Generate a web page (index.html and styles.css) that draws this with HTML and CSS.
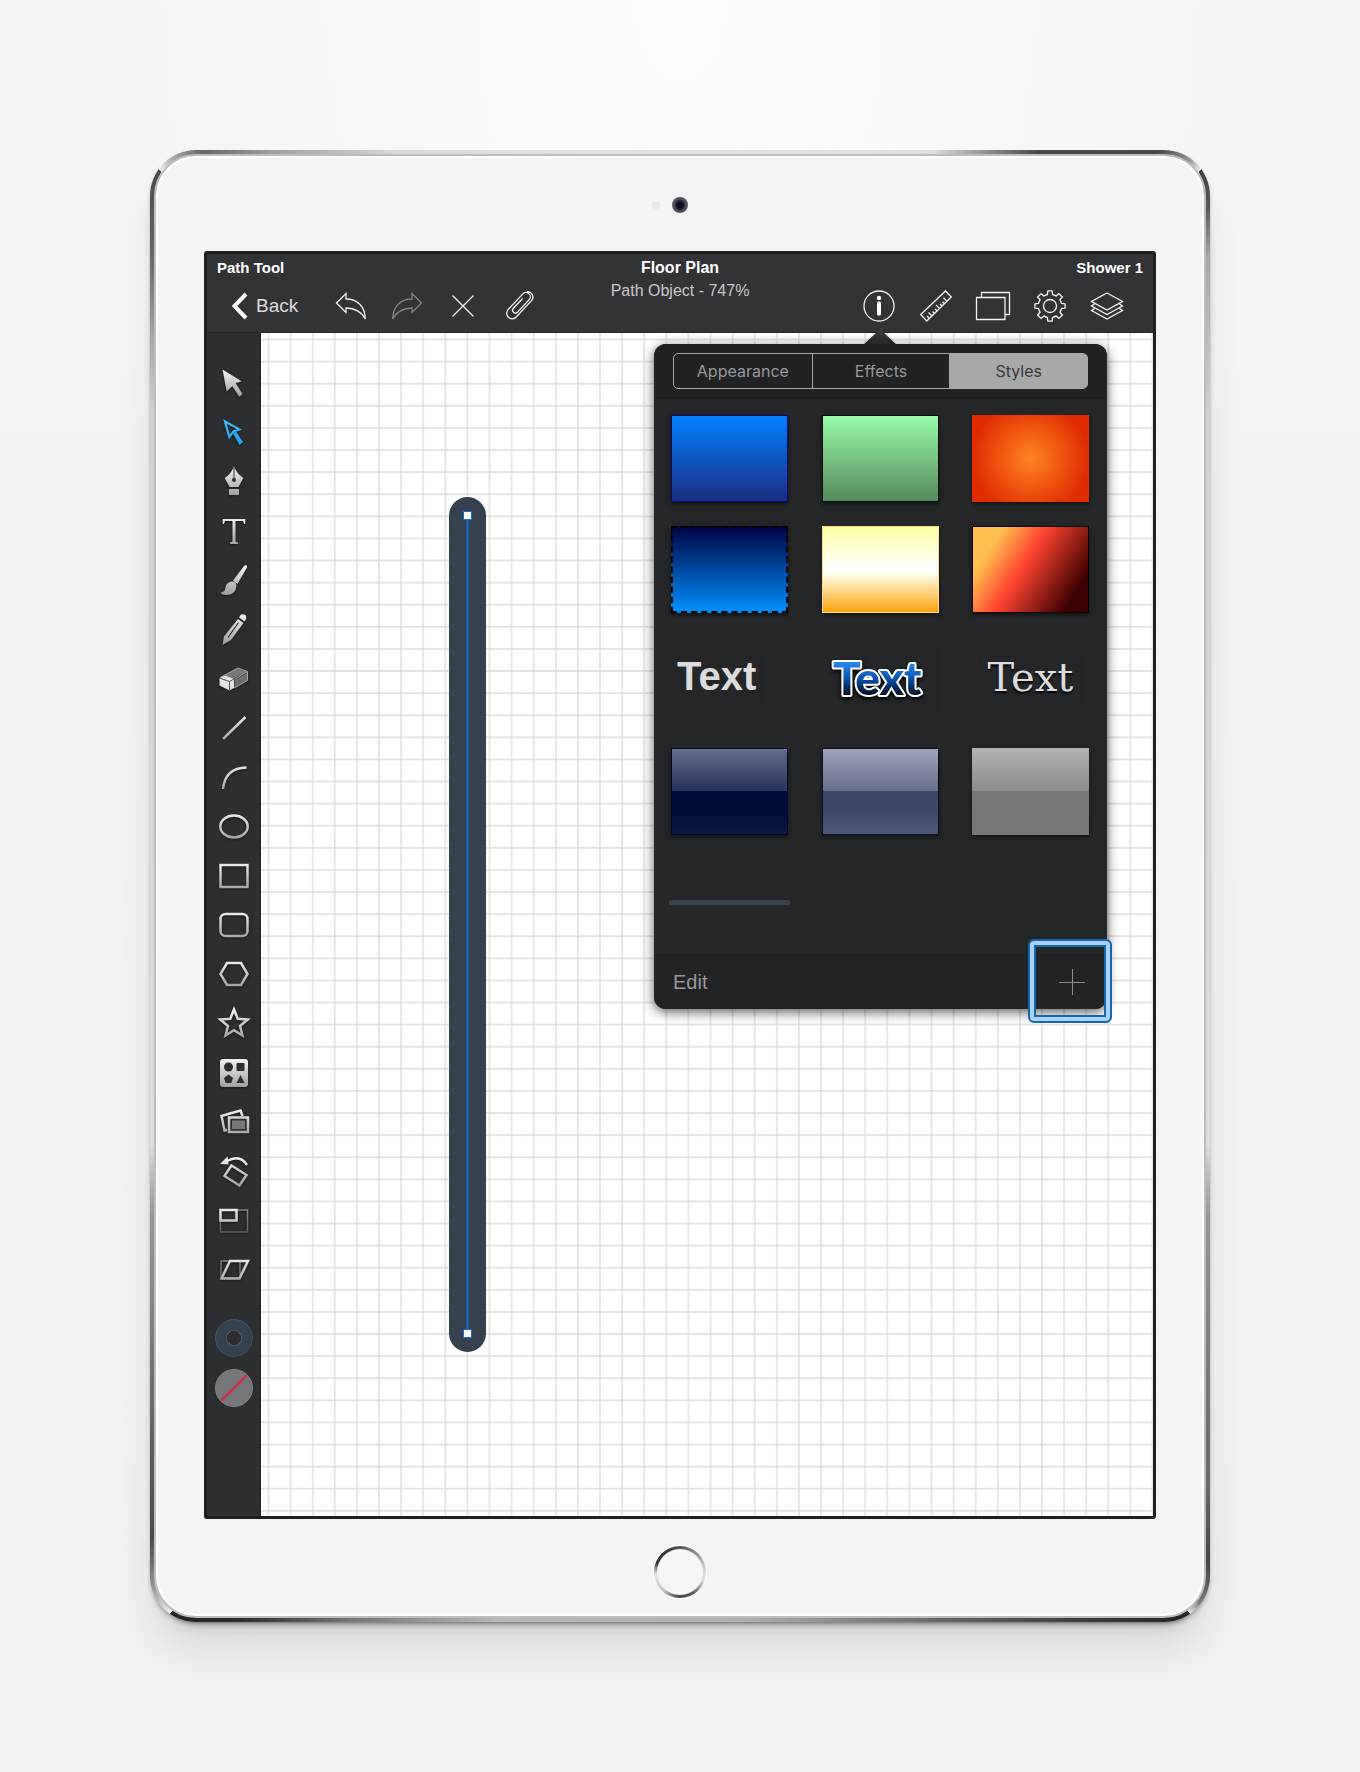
FILE: index.html
```html
<!DOCTYPE html>
<html lang="en">
<head>
<meta charset="utf-8">
<meta name="viewport" content="width=device-width, initial-scale=1">
<title>Floor Plan</title>
<link rel="stylesheet" href="styles.css">
</head>
<body>
<svg class="defs" width="0" height="0" aria-hidden="true">
  <defs>
    <linearGradient id="metal" gradientUnits="userSpaceOnUse" x1="0" y1="2" x2="0" y2="30"><stop offset="0" stop-color="#f2f2f3"/><stop offset="1" stop-color="#9fa0a2"/></linearGradient>
    <linearGradient id="dim" gradientUnits="userSpaceOnUse" x1="0" y1="2" x2="0" y2="30"><stop offset="0" stop-color="#8a8a8c"/><stop offset="1" stop-color="#5c5c5e"/></linearGradient>
    <linearGradient id="azure" gradientUnits="userSpaceOnUse" x1="0" y1="2" x2="0" y2="30"><stop offset="0" stop-color="#4cc3ff"/><stop offset="1" stop-color="#1a9cf0"/></linearGradient>
    <linearGradient id="ink" gradientUnits="userSpaceOnUse" x1="0" y1="14" x2="0" y2="48"><stop offset="0" stop-color="#2b8cf5"/><stop offset=".5" stop-color="#0c55b0"/><stop offset="1" stop-color="#000a1c"/></linearGradient>
  </defs>
</svg>

<main class="device">
  <div class="face">
    <div class="bezel-top"><span class="camera"></span></div>

    <div class="screen">
      <header class="header">
        <div class="header-left">
          <span class="context">Path Tool</span>
          <nav class="bar bar-left">
            <button class="back" type="button">
              <svg width="16" height="28" viewBox="0 0 16 28"><path d="M14 2 2.500 14 14 26" fill="none" stroke="#fff" stroke-width="4"/></svg>
              Back
            </button>
            <button class="icon" type="button" aria-label="Undo"><svg viewBox="0 0 32 32"><path d="M1.500 13 11 3.500V9C23 9 30 17 30.300 29 26 21 20 18 11 18V22.500Z"/></svg></button>
            <button class="icon muted" type="button" aria-label="Redo"><svg viewBox="0 0 32 32"><path d="M30.500 13 21 3.500V9C9 9 2 17 1.700 29 6 21 12 18 21 18V22.500Z"/></svg></button>
            <button class="icon" type="button" aria-label="Close"><svg viewBox="0 0 32 32"><path d="M5.500 5.500 26.500 26.500M26.500 5.500 5.500 26.500"/></svg></button>
            <button class="icon" type="button" aria-label="Attach"><svg viewBox="0 0 32 32"><path transform="rotate(43 16 16)" d="M21.500 8V26A5.500 5.500 0 0 1 10.500 26V4.500A4.300 4.300 0 0 1 19.100 4.500V21.500A2.800 2.800 0 0 1 13.500 21.500V8M21.500 8V3.500A5.500 5.500 0 0 0 12 0"/></svg></button>
          </nav>
        </div>

        <div class="header-mid">
          <h1 class="doc-title">Floor Plan</h1>
          <p class="doc-sub">Path Object - 747%</p>
        </div>

        <div class="header-right">
          <span class="context">Shower 1</span>
          <nav class="bar bar-right">
            <button class="icon" type="button" aria-label="Info"><svg viewBox="0 0 32 32"><circle cx="16" cy="16" r="15"/><circle cx="16" cy="8" r="2.200" class="solid"/><rect x="14" y="11.500" width="4" height="14" rx="1.500" class="solid"/></svg></button>
            <button class="icon" type="button" aria-label="Ruler"><svg viewBox="0 0 32 32"><path d="M25.500 1 31.300 7 6.700 31 .7 24.500ZM9.500 28.500 7 26M12 26 8.500 22.500M14.500 23.500 12.500 21.500M17 21 15 19M19.500 18.500 16 15M22 16 20 14M24.500 13.800 22.500 11.800M27 11.200 23.500 7.700"/></svg></button>
            <button class="icon" type="button" aria-label="Canvases"><svg viewBox="0 0 32 32"><path d="M-.5 7.500H28V29.500H-.5ZM4.500 7.500V2.500H32.500V24.500H28"/></svg></button>
            <button class="icon" type="button" aria-label="Settings"><svg viewBox="0 0 32 32"><g transform="translate(16 16)"><path stroke-linejoin="round" d="M-2.600-11.400-2.200-15.100H2.200L2.600-11.400Q4.600-11 6.200-9.900L9-12.400 12.400-9 9.900-6.200Q11-4.600 11.400-2.600L15.100-2.200V2.200L11.400 2.600Q11 4.600 9.900 6.200L12.400 9 9 12.400 6.200 9.900Q4.600 11 2.600 11.400L2.200 15.100H-2.200L-2.600 11.400Q-4.600 11-6.200 9.900L-9 12.400-12.400 9-9.900 6.200Q-11 4.600-11.400 2.600L-15.100 2.200V-2.200L-11.400-2.600Q-11-4.600-9.900-6.200L-12.400-9-9-12.400-6.200-9.900Q-4.600-11-2.600-11.400Z"/><circle r="6.500"/></g></svg></button>
            <button class="icon" type="button" aria-label="Layers"><svg viewBox="0 0 32 32"><path d="M16 3 31.500 11.500 16 20 .5 11.500ZM3.500 14 .5 16 16 24.500 31.500 16 28.500 14M3.500 18.500 .5 20.500 16 29 31.500 20.500 28.500 18.500"/></svg></button>
          </nav>
        </div>
      </header>

      <div class="workspace">
        <aside class="sidebar">
          <div class="tools">
            <button class="tool" type="button" aria-label="Select"><svg viewBox="0 0 32 32"><path d="M4.500 2.500 23.700 14.300 17.700 16.300 24.500 27 21.300 29.700 14.300 19.300 8.700 24.500Z" class="fill"/></svg></button>
            <button class="tool" type="button" aria-label="Path tool" aria-pressed="true"><svg viewBox="0 0 32 32"><path d="M7 5.500 21.500 13.500 15.500 15.500 11.300 21Z" fill="none" stroke="url(#azure)" stroke-width="2.200"/><path d="M15 17.500 18 15.500 25 26 21.500 29Z" fill="url(#azure)"/></svg></button>
            <button class="tool" type="button" aria-label="Pen"><svg viewBox="0 0 32 32"><path d="M16 1Q18 8 25.300 13L20.500 22H11.500L6.700 13Q14 8 16 1Z" class="fill"/><rect x="11" y="24" width="10" height="6" class="fill"/><path d="M16 2V14" stroke="#2d2e31"/><circle cx="16" cy="15" r="2" fill="#2d2e31"/></svg></button>
            <button class="tool" type="button" aria-label="Text"><svg viewBox="0 0 32 32"><path d="M4.700 4H27.300V9H26L25 6H17.500V26.500L20 27.500V29H12V27.500L14.500 26.500V6H7L6 9H4.700Z" class="fill"/></svg></button>
            <button class="tool" type="button" aria-label="Brush"><svg viewBox="0 0 32 32"><path d="M26.500 1.500Q29.500.5 29 3.500L19.500 20 15 16.500ZM13.500 17.500Q18 17 18.500 21.500 18 31 8 31 4 31 2.500 28.500 6 28.500 7 25.500 7.500 18.500 13.500 17.500Z" class="fill"/></svg></button>
            <button class="tool" type="button" aria-label="Pencil"><svg viewBox="0 0 32 32"><path d="M20 6 25.500 10 13 27 4.500 32 6 23.500Z" class="fill"/><path d="M10 24.500 20.500 9.500" stroke="#2d2e31" stroke-width="1.200"/><path d="M21 4.500Q23-.5 27.500 2 29.500 5 26.500 8.500Z" class="fill"/></svg></button>
            <button class="tool" type="button" aria-label="Eraser"><svg viewBox="0 0 32 32"><path d="M2 14.500 20 5 29.500 8.500 13 17Z" fill="#77787a"/><path d="M16.500 17 29.500 9.500V17.500L16.500 25.500Z" fill="#6c6d70"/><path d="M1.500 15 7 12.500 16 16V25L11.500 27.500 1.500 22.500Z" fill="#e2e2e3"/><path d="M1.500 15 11.500 18.500 16 16M11.500 18.500V27" fill="none" stroke="#55565a"/><path d="M2 14.500 20 5 29.500 8.500V17.500L16 25M16 16.500 29.500 8.500" fill="none" stroke="#a5a5a7"/></svg></button>
            <button class="tool" type="button" aria-label="Line"><svg viewBox="0 0 32 32"><path d="M5 27 27.500 5" class="line"/></svg></button>
            <button class="tool" type="button" aria-label="Arc"><svg viewBox="0 0 32 32"><path d="M5 28Q7 7 28.500 6.500" class="line"/></svg></button>
            <button class="tool" type="button" aria-label="Ellipse"><svg viewBox="0 0 32 32"><ellipse cx="16" cy="16.500" rx="13.700" ry="11" class="line"/></svg></button>
            <button class="tool" type="button" aria-label="Rectangle"><svg viewBox="0 0 32 32"><rect x="2.500" y="5" width="27" height="22" class="line"/></svg></button>
            <button class="tool" type="button" aria-label="Rounded rectangle"><svg viewBox="0 0 32 32"><rect x="2.500" y="5" width="27" height="22" rx="5" class="line"/></svg></button>
            <button class="tool" type="button" aria-label="Polygon"><svg viewBox="0 0 32 32"><path d="M9 5H23L29.500 16 23 27H9L2.500 16Z" class="line"/></svg></button>
            <button class="tool" type="button" aria-label="Star"><svg viewBox="0 0 32 32"><path d="M16 1.500 19.700 10.800 29.800 11.500 22 18 24.500 27.500 16 22.300 7.500 27.500 10 18 2.200 11.500 12.300 10.800Z" class="line"/></svg></button>
            <button class="tool" type="button" aria-label="Shapes"><svg viewBox="0 0 32 32"><rect x="2" y="2" width="28" height="28" rx="3" class="fill"/><g fill="#2d2e31"><circle cx="10.500" cy="10" r="4.500"/><rect x="18.500" y="6" width="8" height="8" rx="1"/><path d="M10.500 17.500 15 21 13.300 26H7.700L6 21ZM22.500 18 26.500 26H18.500Z"/></g></svg></button>
            <button class="tool" type="button" aria-label="Images"><svg viewBox="0 0 32 32"><path d="M9 24 6.500 24.500 3.500 10 22.500 4.500 24.500 10" class="line"/><rect x="11" y="11.500" width="19" height="14.500" fill="#2d2e31" class="line-only"/><rect x="14" y="14.500" width="13" height="8.500" fill="#77787a"/></svg></button>
            <button class="tool" type="button" aria-label="Rotate"><svg viewBox="0 0 32 32"><path d="M13.500 9.500 28.500 19 21.500 29.500 6.500 20Z" class="line"/><path d="M9 5Q22-2 29 9" class="line"/><path d="M2 8 9.500.5 10.500 8.500Z" class="fill"/></svg></button>
            <button class="tool" type="button" aria-label="Scale"><svg viewBox="0 0 32 32"><rect x="2.500" y="5" width="27" height="22" fill="none" stroke="url(#dim)" stroke-width="1.500"/><rect x="2.500" y="5" width="16" height="10.500" class="line"/></svg></button>
            <button class="tool" type="button" aria-label="Shear"><svg viewBox="0 0 32 32"><rect x="3" y="7" width="19" height="17" fill="none" stroke="url(#dim)" stroke-width="1.500"/><path d="M12 7H30L21.500 24.500H3.500Z" class="line"/></svg></button>
          </div>
          <div class="paints">
            <button class="paint paint-stroke" type="button" aria-label="Stroke color"></button>
            <button class="paint paint-none" type="button" aria-label="No fill"></button>
          </div>
        </aside>

        <section class="canvas">
          <svg class="drawing" aria-label="Drawing">
            <defs>
              <pattern id="grid" x="-4" y="-5" width="22.100" height="22.100" patternUnits="userSpaceOnUse"><path d="M11.500 0V22.100M0 11.500H22.100" stroke="#000" stroke-opacity=".14" stroke-width="1.300"/></pattern>
            </defs>
            <rect width="100%" height="100%" fill="url(#grid)"/>
            <rect x="188" y="164" width="37" height="855" rx="18.500" fill="#36414f"/>
            <path d="M206.500 183V1000" stroke="#1470cc" stroke-width="2"/>
            <g fill="#fff" stroke="#1470cc"><rect x="202.500" y="178.500" width="8" height="8"/><rect x="202.500" y="996.500" width="8" height="8"/></g>
          </svg>

          <div class="popover">
            <svg class="pointer" width="34" height="16" viewBox="0 0 34 16" aria-hidden="true"><defs><linearGradient id="tip" x1="0" y1="0" x2="0" y2="1"><stop offset="0" stop-color="#3a3b3e"/><stop offset="1" stop-color="#232426"/></linearGradient></defs><path d="M0 16 15 2Q17 0 19 2L34 16Z" fill="url(#tip)"/></svg>
            <div class="popover-head">
              <div class="segments">
                <button class="segment" type="button">Appearance</button>
                <button class="segment" type="button">Effects</button>
                <button class="segment" type="button" aria-pressed="true">Styles</button>
              </div>
            </div>
            <div class="styles">
              <button class="style blue" type="button" aria-label="Blue"></button>
              <button class="style green" type="button" aria-label="Green"></button>
              <button class="style orange" type="button" aria-label="Orange"></button>
              <button class="style night" type="button" aria-label="Dashed blue"></button>
              <button class="style gold" type="button" aria-label="Gold"></button>
              <button class="style ember" type="button" aria-label="Ember"></button>
              <button class="style sample sample-sans" type="button">Text</button>
              <button class="style sample sample-comic" type="button"><svg width="113" height="68"><text x="9" y="48" stroke="#fff" stroke-width="4" stroke-linejoin="round" paint-order="stroke" fill="url(#ink)">Text</text></svg></button>
              <button class="style sample sample-slab" type="button">Text</button>
              <button class="style gloss-navy" type="button" aria-label="Navy gloss"></button>
              <button class="style gloss-slate" type="button" aria-label="Slate gloss"></button>
              <button class="style gloss-gray" type="button" aria-label="Gray gloss"></button>
              <button class="style rule" type="button" aria-label="Slate line"><span class="rule-line"></span></button>
            </div>
            <div class="popover-foot">
              <button class="edit" type="button">Edit</button>
              <button class="add" type="button" aria-label="Add style"><svg width="26" height="26" viewBox="0 0 26 26"><path d="M13.500 0V26M0 13.500H26" stroke="#8c8c8e"/></svg></button>
            </div>
            <span class="callout"></span>
          </div>
        </section>
      </div>
    </div>

    <div class="bezel-bottom"><button class="home" type="button" aria-label="Home"></button></div>
  </div>
</main>
</body>
</html>
```

FILE: styles.css
```css
* { box-sizing: border-box; }

body {
  margin: 0;
  min-height: 100vh;
  padding: 150px;
  font-family: "Liberation Sans", Arial, sans-serif;
  background:
    radial-gradient(ellipse 46% 60% at 50% 0, #fdfdfd, rgba(253, 253, 253, 0)),
    linear-gradient(#f3f3f3, #f0f0f0);
}

button {
  margin: 0;
  padding: 0;
  border: 0;
  background: none;
  color: inherit;
  font: inherit;
  cursor: pointer;
}

.defs { position: absolute; }

/* Tablet shell */
.device {
  min-width: 1060px;
  padding: 4px;
  border-radius: 46px;
  background: conic-gradient(
    #e0e2e4 0deg, #dcdedf 19deg, #88888b 23deg, #48494d 26deg, #48494d 33deg, #909093 35deg,
    #f0f0f0 36deg, #3c3d40 36deg, #5a5b5e 38deg, #a8a8a8 40deg, #d0d0d0 48deg, #dedede 116deg,
    #96969a 122deg, #85858a 128deg, #66676b 139deg, #444549 142deg, #77787a 144deg, #e8e8e8 145deg,
    #222325 145deg, #333437 149deg, #55565a 157deg, #b0b0b0 175deg, #b8b8b8 194deg,
    #77787a 204deg, #2a2b2d 211deg, #222325 215deg, #f0f0f0 215deg, #909093 217deg,
    #4a4a4f 219deg, #85858a 232deg, #96969a 238deg, #dedede 244deg, #d0d0d0 312deg,
    #a8a8a8 316deg, #66676b 320deg, #48494d 324deg, #f0f0f0 324deg, #b0b0b2 325deg,
    #66676b 327deg, #a0a0a3 331deg, #d8dadb 339deg, #e0e2e4 360deg);
  box-shadow:
    0 3px 5px -2px rgba(0, 0, 0, .5),
    0 12px 16px -10px rgba(0, 0, 0, .15),
    0 30px 40px -10px rgba(0, 0, 0, .12);
}

.face {
  border: 2px solid #bdbdbf;
  border-radius: 42px;
  padding: 2px 48px;
  background: #f3f4f6;
  box-shadow: inset 0 0 0 2px #fff;
}

.bezel-top {
  display: grid;
  place-items: center;
  height: 93px;
}

.camera {
  position: relative;
  width: 16px;
  height: 16px;
  border-radius: 50%;
  background: radial-gradient(circle, #0a0c1c 0 3px, #1d2440 4px, #4c4c52 6px, #55565a 8px);
}

.camera::before {
  content: "";
  position: absolute;
  top: 4px;
  right: 28px;
  width: 8px;
  height: 8px;
  border-radius: 50%;
  background: #e7e7e9;
}

.bezel-bottom {
  display: flex;
  justify-content: center;
  align-items: center;
  height: 95px;
  padding-top: 10px;
}

.home {
  width: 52px;
  height: 52px;
  border: 3px solid transparent;
  border-radius: 50%;
  background:
    linear-gradient(#f6f6f9, #f6f6f9) padding-box,
    conic-gradient(#55565a, #88888b 35deg, #d0d0d2 80deg, #e0e0e2 110deg, #55565a 150deg, #48494d 185deg, #c0c0c2 220deg, #e8e8ea 265deg, #333437 290deg, #333437 320deg, #55565a) border-box;
  box-shadow: 0 0 0 1px #fafafb;
}

/* App */
.screen {
  border: 3px solid #1f1f21;
  border-radius: 3px;
  background: #2d2e31;
}

.header {
  display: grid;
  grid-template-columns: 1fr auto 1fr;
  min-height: 79px;
  padding: 4px 10px 0;
  border-bottom: 1px solid #242527;
  background: #323336;
  color: #fff;
  line-height: 20px;
}

.context { font-size: 15px; font-weight: 700; }

.header-left, .header-right {
  display: flex;
  flex-direction: column;
  gap: 12px;
}

.header-right { align-items: flex-end; }

.bar { display: flex; align-items: center; gap: 25px; }
.bar-left { gap: 24px; padding-left: 15px; }
.bar-right { padding-right: 20px; }

.back {
  display: flex;
  align-items: center;
  gap: 8px;
  margin-right: 13px;
  color: #dcdcde;
  font-size: 19px;
}

.icon { width: 32px; height: 32px; }

.icon svg {
  display: block;
  width: 32px;
  height: 32px;
  overflow: visible;
  fill: none;
  stroke: #f4f4f6;
  stroke-width: 1.3;
}

.icon.muted svg { stroke: #85868a; }
.icon .solid { fill: #fff; stroke: none; }

.header-mid {
  display: flex;
  flex-direction: column;
  gap: 3px;
  text-align: center;
  font-size: 16px;
}

.doc-title, .doc-sub { margin: 0; font-size: 16px; }
.doc-sub { color: #c8c8ca; }

.workspace { display: flex; }

.sidebar {
  width: 54px;
  padding: 25px 0 109px;
  border-right: 1px solid #1f1f21;
}

.tools {
  display: grid;
  grid-template-rows: repeat(19, 1fr);
  height: 937px;
}

.tool { display: grid; place-items: center; }

.tool svg {
  width: 32px;
  height: 32px;
  overflow: visible;
  filter: drop-shadow(0 1px 1px rgba(0, 0, 0, .5));
}

.fill { fill: url(#metal); }
.line { fill: none; stroke: url(#metal); stroke-width: 2.5; }
.line-only { stroke: url(#metal); stroke-width: 2.5; }

.paints {
  display: grid;
  justify-items: center;
  gap: 12px;
  margin-top: 24px;
}

.paint { width: 38px; height: 38px; border-radius: 50%; }

.paint-stroke {
  border: 1px solid #465160;
  background: radial-gradient(circle, #2d2e31 0 7px, #4c5560 7px 8px, #36414f 8px);
}

.paint-none {
  border: 1px solid #858585;
  background: linear-gradient(to bottom right, #757677 47%, #d03040 48%, #d03040 52%, #757677 53%);
}

.canvas {
  position: relative;
  flex: 1;
  background: #fff;
}

.drawing { position: absolute; inset: 0; width: 100%; height: 100%; }

/* Styles popover */
.popover {
  position: absolute;
  top: 11px;
  right: 46px;
  width: 453px;
  border-radius: 12px;
  background: #252628;
  box-shadow: 0 3px 12px rgba(0, 0, 0, .65);
}

.pointer { position: absolute; top: -15px; right: 210px; }

.popover-head {
  padding: 9px 19px;
  border-bottom: 1px solid #1f2022;
  border-radius: 12px 12px 0 0;
  background: #212224;
}

.segments {
  display: grid;
  grid-template-columns: repeat(3, 1fr);
  height: 36px;
  overflow: hidden;
  border: 1px solid #a8a8a9;
  border-radius: 5px;
  color: #98999a;
  font: 16px/20px Inter, sans-serif;
}

.segment + .segment { border-left: 1px solid #a8a8a9; }
.segment[aria-pressed="true"] { background: #a8a8a9; color: #38393b; }

.styles {
  display: grid;
  grid-template-columns: repeat(3, 117px);
  grid-auto-rows: 87px;
  justify-content: space-between;
  gap: 24px 0;
  padding: 16px 18px 8px 17px;
}

.style { box-shadow: 0 2px 4px rgba(0, 0, 0, .5); }

.blue { border: 1px solid #0a0a70; background: linear-gradient(#0280ff, #1a2e82); }
.green { border: 1px solid #0a0f0a; background: linear-gradient(#98fba8, #568a5e); }
.orange { background: radial-gradient(circle, #ff8424, #e02c00 58px); }
.night { border: 2px dashed #000; background: linear-gradient(#000340, #0090ff) border-box; }
.gold { border: 1px solid #ffd98c; background: linear-gradient(#fbffa0, #fff 48%, #fffff0 54%, #fca40c); }
.ember { border: 1px solid #100; background: linear-gradient(122deg, #ffc050 18%, #ff4530 44%, #3c0000 86%); }

.sample {
  display: grid;
  justify-self: center;
  align-self: center;
  place-items: center;
  border: 1px solid #222325;
  box-shadow: none;
  color: #dcdcde;
  line-height: 40px;
}

.sample-sans { justify-self: start; padding: 0 5px 9px; font-size: 40px; font-weight: 700; }
.sample-comic { font: 900 46px/46px Lato, sans-serif; }
.sample-comic svg { display: block; overflow: visible; filter: drop-shadow(0 2px 2px #000); }
.sample-slab { padding: 0 8px 8px; font: 40px/40px "DejaVu Serif", serif; text-shadow: 0 2px 2px #000; }

.gloss-navy { border: 1px solid #00082c; background: linear-gradient(#666c8c, #26325a 50%, #000d38 50%, #000d38 75%, #0a1844); }
.gloss-slate { border: 1px solid #0a1030; background: linear-gradient(#9fa3b8, #656f88 50%, #3b4566 50%, #3d4868 70%, #4c5876); }
.gloss-gray { background: linear-gradient(#b4b4b6, #8a898e 50%, #78777c 50%, #757479); }

.rule { display: grid; align-items: center; box-shadow: none; }
.rule-line { height: 5px; margin: 0 -2px; border-radius: 3px; background: #3a4450; }

.popover-foot {
  display: flex;
  justify-content: space-between;
  align-items: center;
  height: 55px;
  padding: 0 17px 0 19px;
  border-top: 1px solid #1f2022;
  border-radius: 0 0 12px 12px;
  background: #222325;
}

.edit { color: #98999a; font-size: 20px; }
.add { display: grid; place-items: center; width: 36px; height: 36px; }

.callout {
  position: absolute;
  right: -5px;
  bottom: -14px;
  width: 84px;
  height: 84px;
  border: 2px solid #1766ab;
  border-radius: 6px;
  box-shadow: inset 0 0 0 4px #a9d2f8, inset 0 0 0 6px #1766ab;
  pointer-events: none;
}
```
